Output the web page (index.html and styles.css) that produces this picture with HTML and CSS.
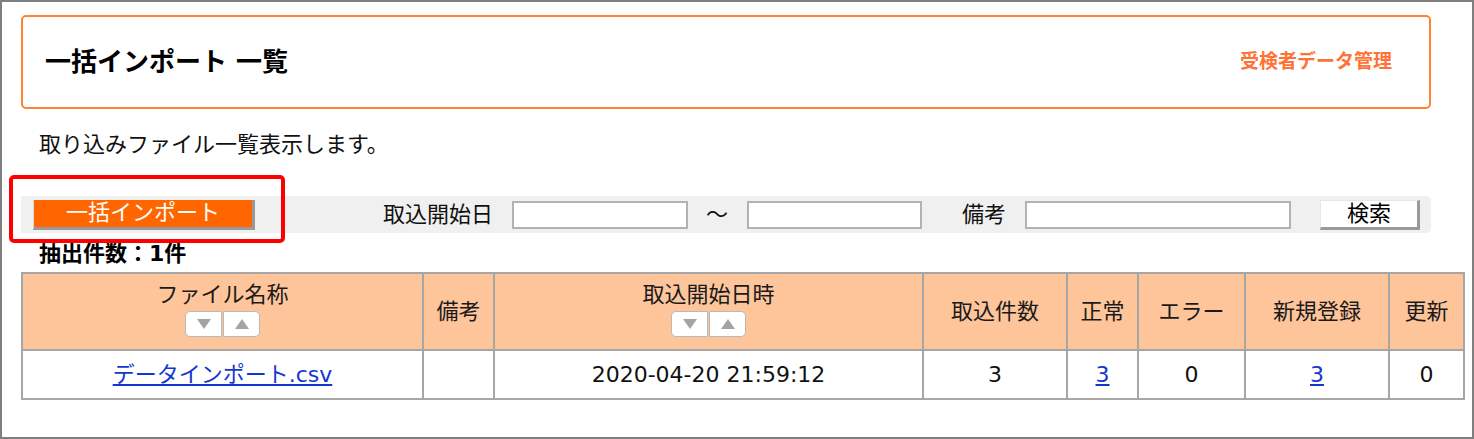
FILE: index.html
```html
<!DOCTYPE html>
<html lang="ja">
<head>
<meta charset="utf-8">
<title>一括インポート 一覧</title>
<link rel="stylesheet" href="styles.css">
</head>
<body>
<div class="frame">
  <div class="head">
    <h1 class="title">一括インポート 一覧</h1>
    <a class="crumb">受検者データ管理</a>
  </div>
  <p class="desc">取り込みファイル一覧表示します。</p>
  <div class="band">
    <button class="btn-import">一括インポート</button>
    <span class="lbl lbl-date">取込開始日</span>
    <input class="inp inp-date1" type="text">
    <span class="tilde">～</span>
    <input class="inp inp-date2" type="text">
    <span class="lbl lbl-note">備考</span>
    <input class="inp inp-note" type="text">
    <button class="btn-search">検索</button>
  </div>
  <p class="count">抽出件数：1件</p>
  <table class="list">
    <colgroup>
      <col class="c1"><col class="c2"><col class="c3"><col class="c4"><col class="c5"><col class="c6"><col class="c7"><col class="c8">
    </colgroup>
    <tr class="hrow">
      <th>
        <div class="htxt">ファイル名称</div>
        <div class="sort">
          <span class="sbtn sl"><svg width="14" height="10" viewBox="0 0 14 10"><path d="M0 0H14L7 10Z" fill="#a3a3a3"/></svg></span><span class="sbtn sr"><svg width="14" height="10" viewBox="0 0 14 10"><path d="M0 10H14L7 0Z" fill="#a3a3a3"/></svg></span>
        </div>
      </th>
      <th>備考</th>
      <th>
        <div class="htxt">取込開始日時</div>
        <div class="sort">
          <span class="sbtn sl"><svg width="14" height="10" viewBox="0 0 14 10"><path d="M0 0H14L7 10Z" fill="#a3a3a3"/></svg></span><span class="sbtn sr"><svg width="14" height="10" viewBox="0 0 14 10"><path d="M0 10H14L7 0Z" fill="#a3a3a3"/></svg></span>
        </div>
      </th>
      <th>取込件数</th>
      <th>正常</th>
      <th>エラー</th>
      <th>新規登録</th>
      <th>更新</th>
    </tr>
    <tr class="drow">
      <td><a class="lnk" href="#">データインポート.csv</a></td>
      <td></td>
      <td>2020-04-20 21:59:12</td>
      <td>3</td>
      <td><a class="lnk" href="#">3</a></td>
      <td>0</td>
      <td><a class="lnk" href="#">3</a></td>
      <td>0</td>
    </tr>
  </table>
  <div class="mark"></div>
</div>
</body>
</html>
```

FILE: styles.css
```css
* { box-sizing: border-box; }
html, body { margin: 0; padding: 0; background: #fff; }
body {
  font-family: "DejaVu Sans", "Noto Sans CJK JP", sans-serif;
  font-size: 22px;
  color: #111;
}
.frame {
  position: relative;
  width: 1474px;
  height: 439px;
  border: 2px solid #7f7f7f;
  padding: 13px 0 0 19px;
  background: #fff;
}
.head {
  width: 1410px;
  height: 94px;
  border: 2px solid #ff8332;
  border-radius: 5px;
  display: flex;
  align-items: center;
  justify-content: space-between;
  padding: 0 37px 0 22px;
}
.title {
  margin: 0;
  font-size: 26px;
  font-weight: bold;
  color: #000;
  line-height: 30px;
}
.crumb {
  font-size: 19px;
  font-weight: bold;
  color: #ff7236;
  line-height: 24px;
  margin-top: -3px;
}
.desc {
  margin: 21px 0 0 18px;
  line-height: 30px;
}
.band {
  margin-top: 36px;
  width: 1410px;
  height: 37px;
  background: #f0f0f0;
  border-radius: 0 5px 5px 0;
  display: flex;
  align-items: center;
  padding-left: 12px;
}
.btn-import {
  width: 222px;
  height: 30px;
  margin: 0;
  padding: 0;
  background: #ff6600;
  color: #fff;
  font-family: inherit;
  font-size: 22px;
  line-height: 26px;
  border: 0;
  border-left: 1px solid #d9d9d9;
  border-right: 3px solid #9a9a9a;
  border-bottom: 3px solid #9a9a9a;
}
.lbl, .tilde { line-height: 28px; white-space: nowrap; }
.lbl-date { margin-left: 128px; width: 110px; }
.inp {
  height: 28px;
  margin: 0;
  padding: 0 4px;
  border: 2px solid #b2b2b2;
  background: #fff;
  font-family: inherit;
  font-size: 18px;
}
.inp-date1 { margin-left: 19px; width: 176px; }
.tilde { margin-left: 18px; width: 22px; }
.inp-date2 { margin-left: 19px; width: 175px; }
.lbl-note { margin-left: 40px; width: 44px; }
.inp-note { margin-left: 19px; width: 266px; }
.btn-search {
  margin: 0 0 0 29px;
  width: 100px;
  height: 30px;
  padding: 0;
  background: #fff;
  color: #000;
  font-family: inherit;
  font-size: 22px;
  line-height: 26px;
  border: 0;
  border-left: 1px solid #e6e6e6;
  border-top: 1px solid #e6e6e6;
  border-right: 3px solid #9a9a9a;
  border-bottom: 3px solid #9a9a9a;
}
.count {
  margin: 7px 0 0 18px;
  font-weight: bold;
  line-height: 28px;
  color: #000;
}
.list {
  margin-top: 4px;
  width: 1442px;
  border-collapse: collapse;
  table-layout: fixed;
}
.c1 { width: 401px; }
.c2 { width: 71px; }
.c3 { width: 429px; }
.c4 { width: 144px; }
.c5 { width: 71px; }
.c6 { width: 107px; }
.c7 { width: 144px; }
.c8 { width: 75px; }
.list th, .list td {
  border: 2px solid #a6a6a6;
  text-align: center;
  vertical-align: middle;
  padding: 0;
  font-weight: normal;
  line-height: 28px;
}
.list th { background: #ffc59a; color: #1a1a1a; }
.hrow { height: 77px; }
.drow { height: 49px; }
.htxt { line-height: 28px; margin-top: -6px; }
.sort {
  display: flex;
  justify-content: center;
  margin-top: 2px;
  gap: 1px;
}
.sbtn {
  width: 37px;
  height: 26px;
  background: #fff;
  border: 1px solid #b9b9b9;
  display: flex;
  align-items: center;
  justify-content: center;
}
.sl { border-radius: 5px 0 0 5px; }
.sr { border-radius: 0 5px 5px 0; }
.lnk { color: #1437d0; text-decoration: underline; }
.mark {
  position: absolute;
  left: 7px;
  top: 173px;
  width: 276px;
  height: 68px;
  border: 4px solid #ff0000;
  border-radius: 5px;
  pointer-events: none;
}
```
